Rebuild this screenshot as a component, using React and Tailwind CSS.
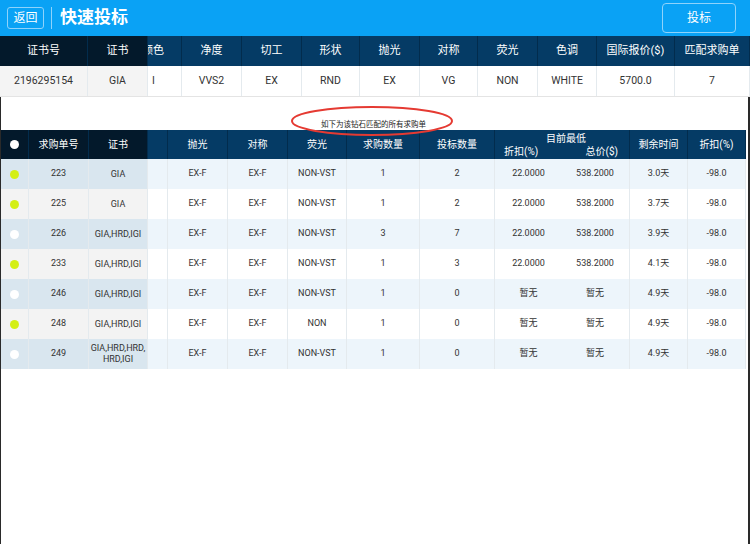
import React from "react";

const FONT = { fontFamily: 'Roboto, "Noto Sans CJK SC", sans-serif' };

const top1 = ["证书号", "证书", "颜色", "净度", "切工", "形状", "抛光", "对称", "荧光", "色调", "国际报价($)", "匹配求购单"];
const row1 = ["2196295154", "GIA", "I", "VVS2", "EX", "RND", "EX", "VG", "NON", "WHITE", "5700.0", "7"];

const rows = [
  { on: true, id: "223", cert: "GIA", fl: "NON-VST", q: "1", b: "2", d: "22.0000", t: "538.2000", r: "3.0天" },
  { on: true, id: "225", cert: "GIA", fl: "NON-VST", q: "1", b: "2", d: "22.0000", t: "538.2000", r: "3.7天" },
  { on: false, id: "226", cert: "GIA,HRD,IGI", fl: "NON-VST", q: "3", b: "7", d: "22.0000", t: "538.2000", r: "3.9天" },
  { on: true, id: "233", cert: "GIA,HRD,IGI", fl: "NON-VST", q: "1", b: "3", d: "22.0000", t: "538.2000", r: "4.1天" },
  { on: false, id: "246", cert: "GIA,HRD,IGI", fl: "NON-VST", q: "1", b: "0", d: "暂无", t: "暂无", r: "4.9天" },
  { on: true, id: "248", cert: "GIA,HRD,IGI", fl: "NON", q: "1", b: "0", d: "暂无", t: "暂无", r: "4.9天" },
  { on: false, id: "249", cert: "GIA,HRD,HRD,\nHRD,IGI", fl: "NON-VST", q: "1", b: "0", d: "暂无", t: "暂无", r: "4.9天" },
];

function HCell({ children, dark, className = "" }) {
  return (
    <div
      className={`h-full flex items-center justify-center border-r border-[#022c4d] ${dark ? "bg-[#03192b]" : "bg-[#053b65]"} ${className}`}
    >
      {children}
    </div>
  );
}

function DCell({ children, bg, className = "" }) {
  return (
    <div className={`h-full flex items-center justify-center border-r border-[#e4eaee] ${bg} ${className}`}>
      {children}
    </div>
  );
}

export default function App() {
  return (
    <div className="w-[750px] h-[544px] bg-white flex flex-col overflow-hidden" style={FONT}>
      {/* Top bar */}
      <div className="h-[36px] bg-[#0aa2f5] flex items-center px-[7px] shrink-0">
        <div className="w-[37px] h-[22px] rounded-[3px] border border-[#8fd3fb] text-white text-[12px] flex items-center justify-center">
          返回
        </div>
        <div className="w-px h-[22px] bg-[#8fd3fb] ml-[7px] mr-[8px]" />
        <div className="text-white text-[17px] font-bold">快速投标</div>
        <div className="ml-auto mr-[7px] w-[74px] h-[30px] rounded-[4px] border border-[#8fd3fb] text-white text-[12px] flex items-center justify-center">
          投标
        </div>
      </div>

      {/* Diamond table */}
      <div className="grid grid-cols-[88px_60px_34px_60px_60px_58px_60px_58px_60px_59px_78px_75px] shrink-0">
        {top1.map((t, i) => (
          <div key={t} className="h-[30px]">
            <HCell dark={i < 2} className={i === 2 ? "justify-start overflow-hidden" : ""}>
              <span className={`text-white text-[11px] whitespace-nowrap ${i === 2 ? "-ml-[6px]" : ""}`}>{t}</span>
            </HCell>
          </div>
        ))}
        {row1.map((t, i) => (
          <div key={i} className="h-[31px] border-b border-[#e4e4e4]">
            <DCell bg={i < 2 ? "bg-[#f4f4f4]" : "bg-white"} className={i === 2 ? "justify-start pl-[4px]" : ""}>
              <span className="text-[#333] text-[10.5px]">{t}</span>
            </DCell>
          </div>
        ))}
      </div>

      {/* Lower area */}
      <div className="flex-1 border-l border-r-2 border-l-[#2a2a2a] border-r-[#2a2a2a] flex flex-col relative">
        <div className="h-[33px] flex items-end justify-center pb-[2px] pr-[2px]">
          <span className="text-[7.5px] text-[#222] leading-none">如下为该钻石匹配的所有求购单</span>
        </div>
        <svg className="absolute left-[289px] top-[8px] pointer-events-none z-10" width="164" height="32" viewBox="0 0 164 32">
          <ellipse cx="82" cy="16" rx="80" ry="14" fill="none" stroke="#e53a32" strokeWidth="2" />
        </svg>

        <div className="w-[745px] grid grid-cols-[28px_60px_59px_20px_60px_60px_59px_73px_75px_67px_68px_58px_58px]">
          {/* header */}
          <div className="h-[29px]">
            <HCell dark>
              <span className="w-[9px] h-[9px] rounded-full bg-white" />
            </HCell>
          </div>
          {[
            ["求购单号", true],
            ["证书", true],
            ["", false],
            ["抛光", false],
            ["对称", false],
            ["荧光", false],
            ["求购数量", false],
            ["投标数量", false],
          ].map(([t, d], i) => (
            <div key={i} className="h-[29px]">
              <HCell dark={d}>
                <span className="text-white text-[10px]">{t}</span>
              </HCell>
            </div>
          ))}
          <div className="h-[29px] col-span-2 bg-[#053b65] border-r border-[#022c4d] flex flex-col items-center justify-center text-white text-[10px] leading-[13px]">
            <span className="pl-[8px]">目前最低</span>
            <div className="w-full flex justify-between pl-[9px] pr-[11px]">
              <span>折扣(%)</span>
              <span>总价($)</span>
            </div>
          </div>
          {["剩余时间", "折扣(%)"].map((t) => (
            <div key={t} className="h-[29px]">
              <HCell>
                <span className="text-white text-[10px]">{t}</span>
              </HCell>
            </div>
          ))}

          {/* rows */}
          {rows.map((r, i) => {
            const odd = i % 2 === 0;
            const fixBg = odd ? "bg-[#d9e6ef]" : "bg-[#f3f3f3]";
            const bg = odd ? "bg-[#edf5fb]" : "bg-white";
            const cells = ["", "EX-F", "EX-F", r.fl, r.q, r.b];
            return (
              <React.Fragment key={r.id}>
                <div className="h-[30px]">
                  <DCell bg={fixBg}>
                    <span className={`w-[9px] h-[9px] rounded-full ${r.on ? "bg-[#d4ef14]" : "bg-white"}`} />
                  </DCell>
                </div>
                <div className="h-[30px]">
                  <DCell bg={fixBg}>
                    <span className="text-[#333] text-[9px]">{r.id}</span>
                  </DCell>
                </div>
                <div className="h-[30px]">
                  <DCell bg={fixBg}>
                    <span className="text-[#333] text-[9px] text-center leading-[11px] whitespace-pre">{r.cert}</span>
                  </DCell>
                </div>
                {cells.map((c, j) => (
                  <div key={j} className="h-[30px]">
                    <DCell bg={bg}>
                      <span className="text-[#333] text-[9px]">{c}</span>
                    </DCell>
                  </div>
                ))}
                <div className="h-[30px] col-span-2">
                  <div className={`h-full flex items-center border-r border-[#e4eaee] ${bg}`}>
                    <span className="w-[67px] text-center text-[#333] text-[9px]">{r.d}</span>
                    <span className="w-[66px] text-center text-[#333] text-[9px]">{r.t}</span>
                  </div>
                </div>
                <div className="h-[30px]">
                  <DCell bg={bg}>
                    <span className="text-[#333] text-[9px]">{r.r}</span>
                  </DCell>
                </div>
                <div className="h-[30px]">
                  <DCell bg={bg}>
                    <span className="text-[#333] text-[9px]">-98.0</span>
                  </DCell>
                </div>
              </React.Fragment>
            );
          })}
        </div>
      </div>
    </div>
  );
}
